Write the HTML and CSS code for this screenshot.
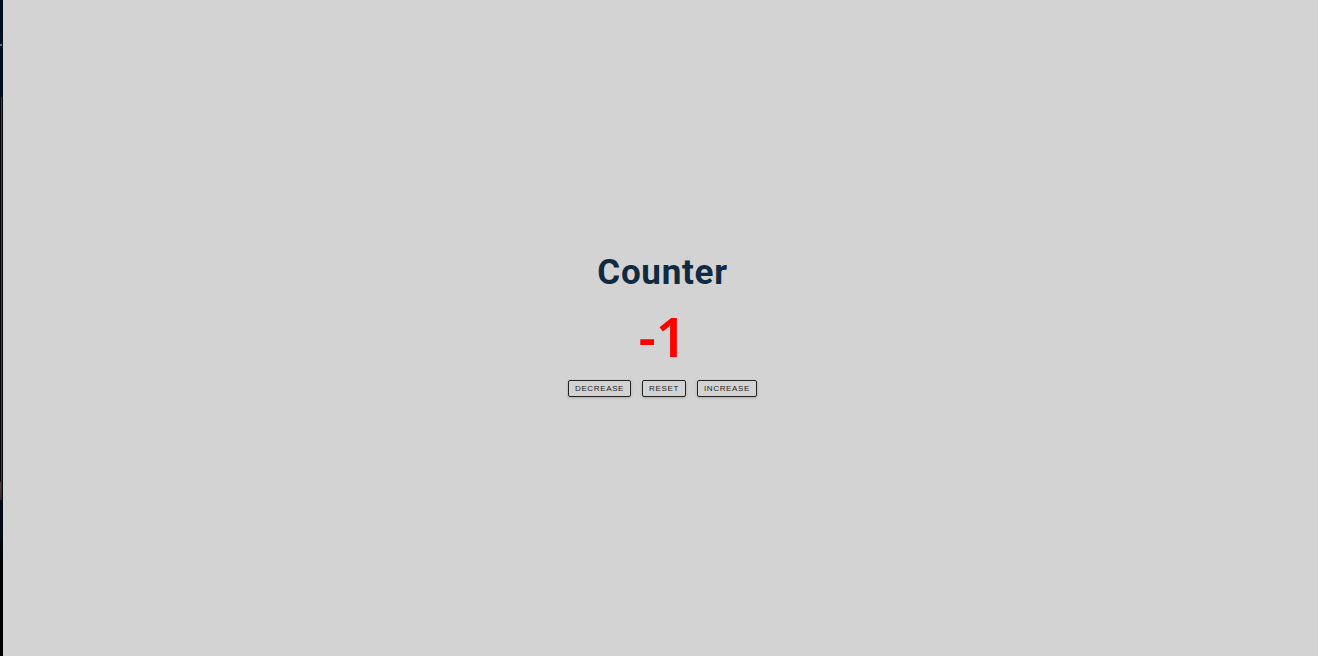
FILE: index.html
```html
<!DOCTYPE html>
<html lang="en">
<head>
<meta charset="utf-8">
<title>Counter</title>
<link rel="stylesheet" href="styles.css">
</head>
<body>
<main class="counter">
<h1 class="title">Counter</h1>
<output class="value">-1</output>
<div class="actions">
<button class="btn" type="button">decrease</button>
<button class="btn" type="button">reset</button>
<button class="btn" type="button">increase</button>
</div>
</main>
</body>
</html>
```
FILE: styles.css
```css
* {
  box-sizing: border-box;
}

body {
  margin: 0;
  padding: 0 0 9px 7px;
  min-height: 100vh;
  display: grid;
  place-items: center;
  background:
    linear-gradient(#39404a, #39404a) 1px 97px / 1px 385px no-repeat,
    linear-gradient(#49363c, #3d2430) 0 482px / 2px 18px no-repeat,
    linear-gradient(#3f7396, #3f7396) 0 44px / 2px 2px no-repeat,
    linear-gradient(#020d1c 0 97px, #05070a 97px 500px, #010a14 500px 530px, #000 560px) 0 0 / 3px 100% no-repeat,
    #d3d3d3;
  color: #102a42;
  font-family: "Open Sans", sans-serif;
}

.counter {
  display: flex;
  flex-direction: column;
  align-items: center;
}

.title {
  margin: 0;
  font: 700 35px/44px Roboto, sans-serif;
  letter-spacing: 0.02em;
}

.value {
  font-family: "Noto Sans", sans-serif;
  font-size: 54px;
  line-height: 82px;
  font-weight: 600;
  color: red;
}

.actions {
  display: flex;
  gap: 11px;
  margin-top: 3px;
}

.btn {
  padding: 3px 6px;
  border: 1px solid #222;
  border-radius: 2px;
  background: transparent;
  box-shadow: 0 1px 3px rgba(0, 0, 0, 0.2);
  color: #222;
  font: 400 8px/9px "Liberation Sans", sans-serif;
  letter-spacing: 0.08em;
  text-transform: uppercase;
}
```
